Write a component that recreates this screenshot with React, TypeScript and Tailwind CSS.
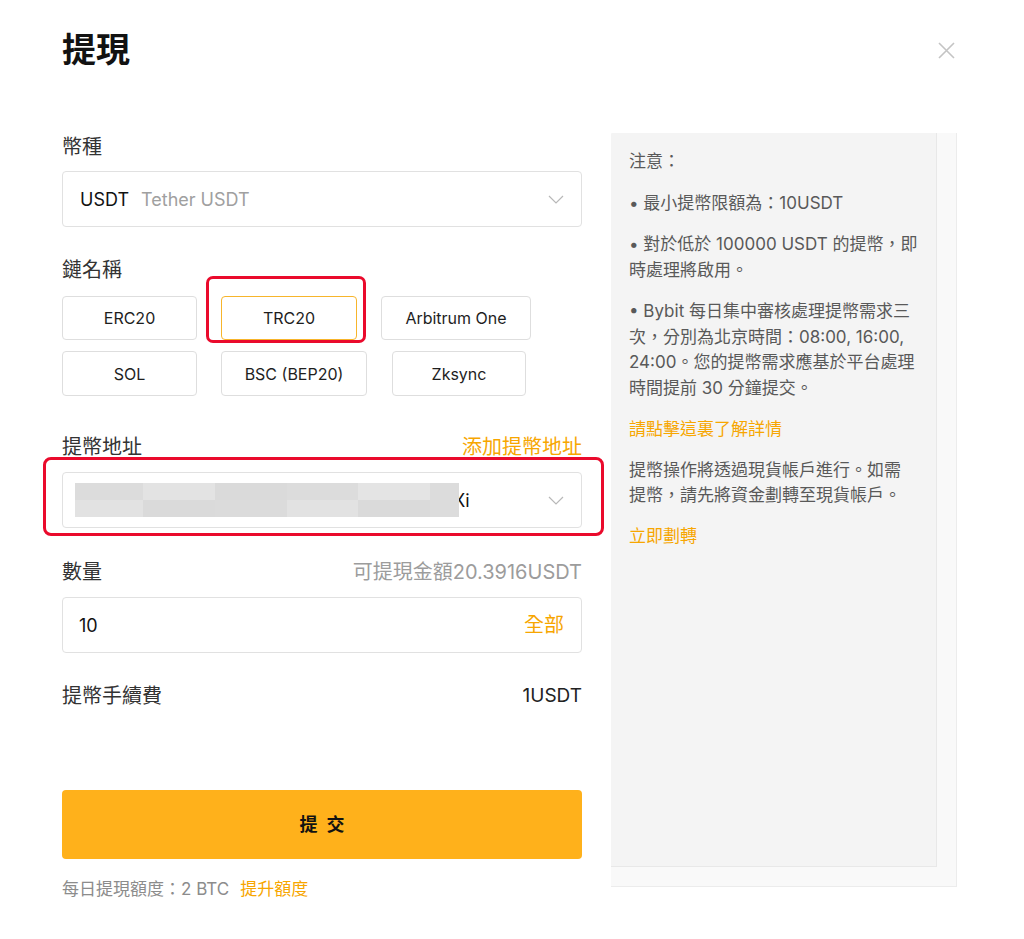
import React from "react";

const Chevron = () => (
  <svg width="16" height="9" viewBox="0 0 16 9" fill="none">
    <path d="M1 1 L8 8 L15 1" stroke="#b8b8b8" strokeWidth="1.2" />
  </svg>
);

const ChainBtn = ({ label, w, active }: { label: string; w: string; active?: boolean }) => (
  <div
    className={`${w} flex items-center justify-center rounded-[4px] border bg-white text-[16px] text-[#1e1e1e] ${
      active ? "border-[#f7b52c]" : "border-[#dedede]"
    }`}
  >
    {label}
  </div>
);

const blurRow1 = ["bg-[#dcdcdc]", "bg-[#e3e3e3]", "bg-[#dadada]", "bg-[#dcdcdc]", "bg-[#e4e4e4]", "bg-[#dcdcdc]"];
const blurRow2 = ["bg-[#e2e2e2]", "bg-[#dadada]", "bg-[#dbdbdb]", "bg-[#e2e2e2]", "bg-[#dadada]", "bg-[#dcdcdc]"];
const blurW = ["w-[68px]", "w-[72px]", "w-[72px]", "w-[71px]", "w-[72px]", "w-[29px]"];

export default function App() {
  return (
    <div className="relative w-[1024px] h-[939px] overflow-hidden bg-white font-['Inter','Noto_Sans_CJK_TC',sans-serif] text-[#121212]">
      {/* header */}
      <div className="flex items-center justify-between pt-[30px] pl-[62px] pr-[69px]">
        <div className="text-[34px] font-bold leading-[40px] text-[#121212]">提現</div>
        <svg width="17" height="17" viewBox="0 0 17 17" fill="none">
          <path d="M1 1 L16 16 M16 1 L1 16" stroke="#c4c4c4" strokeWidth="1.6" />
        </svg>
      </div>

      {/* main */}
      <div className="mt-[63px] flex pl-[62px]">
        {/* left column */}
        <div className="w-[520px] flex flex-col">
          <div className="h-[28px] leading-[28px] text-[20px] text-[#333]">幣種</div>
          <div className="mt-[10px] h-[56px] rounded-[4px] border border-[#e1e1e1] flex items-center justify-between pl-[17px] pr-[17px]">
            <div className="flex items-center text-[18px]">
              <span className="text-[#121212]">USDT</span>
              <span className="ml-[12px] text-[#a0a0a0]">Tether USDT</span>
            </div>
            <Chevron />
          </div>

          <div className="mt-[29px] h-[28px] leading-[28px] text-[20px] text-[#333]">鏈名稱</div>
          <div className="mt-[12px] flex gap-[24px] h-[44px]">
            <ChainBtn label="ERC20" w="w-[135px]" />
            <ChainBtn label="TRC20" w="w-[136px]" active />
            <ChainBtn label="Arbitrum One" w="w-[150px]" />
          </div>
          <div className="mt-[11px] flex h-[45px]">
            <ChainBtn label="SOL" w="w-[135px]" />
            <div className="w-[24px]" />
            <ChainBtn label="BSC (BEP20)" w="w-[146px]" />
            <div className="w-[25px]" />
            <ChainBtn label="Zksync" w="w-[134px]" />
          </div>

          <div className="mt-[37px] h-[28px] leading-[28px] flex justify-between text-[20px]">
            <span className="text-[#333]">提幣地址</span>
            <span className="text-[#f7a600]">添加提幣地址</span>
          </div>
          <div className="mt-[11px] h-[56px] rounded-[4px] border border-[#e1e1e1] flex items-center justify-between pl-[12px] pr-[17px]">
            <div className="flex items-center">
              <div className="relative z-10 flex flex-col">
                <div className="flex h-[17px]">
                  {blurRow1.map((c, i) => (
                    <div key={i} className={`${blurW[i]} ${c}`} />
                  ))}
                </div>
                <div className="flex h-[17px]">
                  {blurRow2.map((c, i) => (
                    <div key={i} className={`${blurW[i]} ${c}`} />
                  ))}
                </div>
              </div>
              <span className="-ml-[6px] text-[18px] text-[#121212]">Xi</span>
            </div>
            <Chevron />
          </div>

          <div className="mt-[30px] h-[28px] leading-[28px] flex justify-between text-[20px]">
            <span className="text-[#333]">數量</span>
            <span className="text-[#9c9c9c]">可提現金額20.3916USDT</span>
          </div>
          <div className="mt-[11px] h-[56px] rounded-[4px] border border-[#e1e1e1] flex items-center justify-between pl-[16px] pr-[17px]">
            <span className="text-[18px] text-[#121212]">10</span>
            <span className="text-[20px] text-[#f7a600]">全部</span>
          </div>

          <div className="mt-[29px] h-[28px] leading-[28px] flex justify-between text-[20px]">
            <span className="text-[#333]">提幣手續費</span>
            <span className="text-[19px] text-[#222]">1USDT</span>
          </div>

          <div className="mt-[80px] h-[69px] rounded-[4px] bg-[#ffb11b] flex items-center justify-center gap-[9px] text-[18px] font-bold text-[#121212]">
            <span>提</span>
            <span>交</span>
          </div>

          <div className="mt-[20px] h-[20px] leading-[20px] flex items-center text-[17px]">
            <span className="text-[#8c8c8c]">每日提現額度：2 BTC</span>
            <span className="ml-[11px] text-[#f7a600]">提升額度</span>
          </div>
        </div>

        {/* right panel */}
        <div className="ml-[29px] w-[346px] h-[754px] bg-[#f9f9f9] border-r border-b border-[#ececec] flex flex-col">
          <div className="w-[326px] h-[734px] bg-[#f4f4f4] border-r border-b border-[#e8e8e8] rounded-tl-[2px] pl-[18px] pt-[16px] text-[17px] leading-[25.5px] text-[#595959] whitespace-nowrap">
            <div>注意：</div>
            <div className="mt-[16px]">• 最小提幣限額為：10USDT</div>
            <div className="mt-[16px]">
              <div>• 對於低於 100000 USDT 的提幣，即</div>
              <div>時處理將啟用。</div>
            </div>
            <div className="mt-[16px]">
              <div>• Bybit 每日集中審核處理提幣需求三</div>
              <div>次，分別為北京時間：08:00, 16:00,</div>
              <div>24:00。您的提幣需求應基於平台處理</div>
              <div>時間提前 30 分鐘提交。</div>
            </div>
            <div className="mt-[16px] text-[#f7a600]">請點擊這裏了解詳情</div>
            <div className="mt-[15px]">
              <div>提幣操作將透過現貨帳戶進行。如需</div>
              <div>提幣，請先將資金劃轉至現貨帳戶。</div>
            </div>
            <div className="mt-[15px] text-[#f7a600]">立即劃轉</div>
          </div>
        </div>
      </div>

      {/* red annotation boxes */}
      <div className="absolute left-[206px] top-[276px] w-[160px] h-[67px] rounded-[7px] border-[3px] border-[#ea0a2c]" />
      <div className="absolute left-[43px] top-[457px] w-[561px] h-[79px] rounded-[8px] border-[3px] border-[#ea0a2c]" />
    </div>
  );
}
